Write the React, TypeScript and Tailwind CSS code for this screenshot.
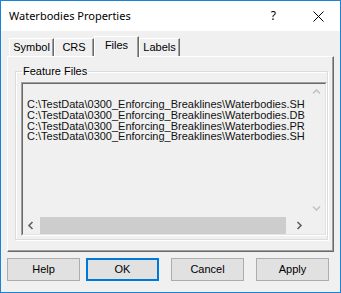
import React from "react";

const files = [
  "C:\\TestData\\0300_Enforcing_Breaklines\\Waterbodies.SHP",
  "C:\\TestData\\0300_Enforcing_Breaklines\\Waterbodies.DBF",
  "C:\\TestData\\0300_Enforcing_Breaklines\\Waterbodies.PRJ",
  "C:\\TestData\\0300_Enforcing_Breaklines\\Waterbodies.SHX",
];

const Chevron = ({ dir, color }: { dir: "up" | "down" | "left" | "right"; color: string }) => {
  const pts = {
    up: "1,5.5 4.5,2 8,5.5",
    down: "1,2.5 4.5,6 8,2.5",
    left: "5.5,1 2,4.5 5.5,8",
    right: "2.5,1 6,4.5 2.5,8",
  }[dir];
  return (
    <svg width="9" height="9" viewBox="0 0 9 9">
      <polyline points={pts} fill="none" stroke={color} strokeWidth="1.6" />
    </svg>
  );
};

const Tab = ({ label, w, active }: { label: string; w: string; active?: boolean }) => {
  if (active) {
    return (
      <div
        className={`${w} h-[21px] -mb-[1px] relative z-10 bg-[#f0f0f0] border-t border-l border-white border-r border-r-[#696969] shadow-[inset_-1px_0_0_#a0a0a0] flex justify-center pt-[2px] leading-[13px]`}
      >
        {label}
      </div>
    );
  }
  return (
    <div
      className={`${w} h-[18px] border-t border-l border-white border-r border-r-[#696969] shadow-[inset_-1px_0_0_#a0a0a0] flex items-center justify-center leading-[13px]`}
    >
      {label}
    </div>
  );
};

export default function App() {
  return (
    <div className="w-[341px] h-[293px] border border-[#1883d7] bg-[#f0f0f0] flex flex-col font-['Liberation_Sans',Arial,sans-serif] text-[11px] text-black">
      {/* title bar */}
      <div className="h-[30px] shrink-0 bg-white flex items-center pl-[8px] pr-[16px]">
        <span className="font-['Noto_Sans',sans-serif] text-[11px]">Waterbodies Properties</span>
        <span className="ml-auto font-['Noto_Sans',sans-serif] text-[12px]">?</span>
        <svg className="ml-[37px]" width="11" height="11" viewBox="0 0 11 11">
          <path d="M0.5 0.5 L10.5 10.5 M10.5 0.5 L0.5 10.5" stroke="#000" strokeWidth="1" />
        </svg>
      </div>

      <div className="px-[6px] pt-[5px] flex flex-col">
        {/* tabs */}
        <div className="h-[20px] flex items-end pl-[2px]">
          <Tab label="Symbol" w="w-[45px]" />
          <Tab label="CRS" w="w-[40px]" />
          <Tab label="Files" w="w-[45px]" active />
          <Tab label="Labels" w="w-[41px]" />
        </div>

        {/* tab panel */}
        <div className="h-[196px] border-t border-l border-white border-r border-b border-r-[#696969] border-b-[#696969] shadow-[inset_-1px_-1px_0_#a0a0a0] pl-[7px] pr-[5px] pt-[8px]">
          <fieldset className="min-w-0 border border-[#dcdcdc] shadow-[inset_1px_1px_0_#fff,1px_1px_0_#fff] pl-[5px] pb-[3px]">
            <legend className="ml-[1px] px-[1px] leading-[12px]">Feature Files</legend>
            {/* list box */}
            <div className="mt-[5px] h-[154px] border border-t-[#a0a0a0] border-l-[#a0a0a0] border-r-white border-b-white">
              <div className="h-full flex flex-col border border-t-[#696969] border-l-[#696969] border-r-[#e3e3e3] border-b-[#e3e3e3]">
                <div className="flex-1 flex min-h-0">
                  <div className="flex-1 min-w-0 mr-[3px] overflow-hidden pl-[4px] pt-[15px] whitespace-nowrap leading-[10.75px] text-[#111]">
                    {files.map((f) => (
                      <div key={f}>{f}</div>
                    ))}
                  </div>
                  <div className="w-[17px] flex flex-col">
                    <div className="h-[17px] flex items-center justify-center">
                      <Chevron dir="up" color="#c4c4c4" />
                    </div>
                    <div className="flex-1" />
                    <div className="h-[17px] flex items-center justify-center">
                      <Chevron dir="down" color="#c4c4c4" />
                    </div>
                  </div>
                </div>
                <div className="h-[17px] flex">
                  <div className="w-[17px] flex items-center justify-center">
                    <Chevron dir="left" color="#606060" />
                  </div>
                  <div className="flex-1 flex">
                    <div className="w-[246px] bg-[#cdcdcd]" />
                  </div>
                  <div className="w-[17px] flex items-center justify-center">
                    <Chevron dir="right" color="#606060" />
                  </div>
                  <div className="w-[17px]" />
                </div>
              </div>
            </div>
          </fieldset>
        </div>

        {/* buttons */}
        <div className="mt-[6px] flex">
          <button className="w-[73px] h-[23px] bg-[#e1e1e1] border border-[#adadad]">Help</button>
          <button className="ml-[6px] w-[73px] h-[23px] bg-[#e1e1e1] border-2 border-[#0078d7]">OK</button>
          <button className="ml-[12px] w-[73px] h-[23px] bg-[#e1e1e1] border border-[#adadad]">Cancel</button>
          <button className="ml-[12px] w-[73px] h-[23px] bg-[#e1e1e1] border border-[#adadad]">Apply</button>
        </div>
      </div>
    </div>
  );
}
